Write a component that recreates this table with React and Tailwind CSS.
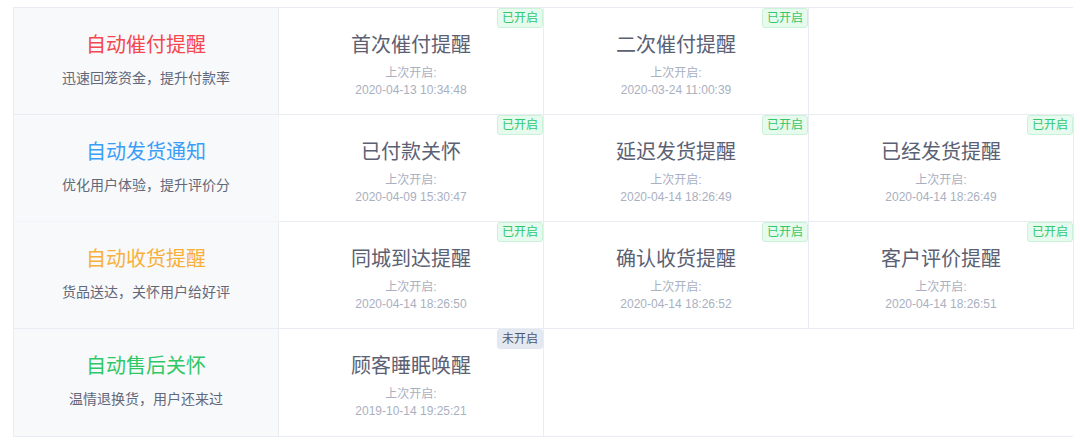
const groups = [
  {
    title: '自动催付提醒',
    desc: '迅速回笼资金，提升付款率',
    color: 'text-[#f5474f]',
    edge: 'border-b border-[#e9ecf2]',
    items: [
      { name: '首次催付提醒', time: '2020-04-13 10:34:48', on: true },
      { name: '二次催付提醒', time: '2020-03-24 11:00:39', on: true },
    ],
  },
  {
    title: '自动发货通知',
    desc: '优化用户体验，提升评价分',
    color: 'text-[#3a9ef8]',
    edge: 'border-b border-[#f2f4f8]',
    items: [
      { name: '已付款关怀', time: '2020-04-09 15:30:47', on: true },
      { name: '延迟发货提醒', time: '2020-04-14 18:26:49', on: true },
      { name: '已经发货提醒', time: '2020-04-14 18:26:49', on: true },
    ],
  },
  {
    title: '自动收货提醒',
    desc: '货品送达，关怀用户给好评',
    color: 'text-[#f9b03a]',
    edge: 'border-b border-[#e9ecf2]',
    items: [
      { name: '同城到达提醒', time: '2020-04-14 18:26:50', on: true },
      { name: '确认收货提醒', time: '2020-04-14 18:26:52', on: true },
      { name: '客户评价提醒', time: '2020-04-14 18:26:51', on: true },
    ],
  },
  {
    title: '自动售后关怀',
    desc: '温情退换货，用户还来过',
    color: 'text-[#2fc866]',
    edge: '',
    items: [{ name: '顾客睡眠唤醒', time: '2019-10-14 19:25:21', on: false }],
  },
];

function Badge({ on }) {
  return on ? (
    <span className="absolute top-0 right-0 h-[20px] px-[4px] leading-[18px] text-[12px] rounded-[3px] border border-[#c9f2d9] bg-[#e7faee] text-[#31c76b]">
      已开启
    </span>
  ) : (
    <span className="absolute top-0 right-0 h-[20px] px-[4px] leading-[18px] text-[12px] rounded-[3px] border border-[#e1e5ee] bg-[#e4e8f0] text-[#4f5668]">
      未开启
    </span>
  );
}

function Cell({ item, last }) {
  return (
    <div className={`relative h-[107px] flex flex-col items-center pt-[23px] border-r border-[#e9ecf2] ${last ? '' : 'border-b'}`}>
      <Badge on={item.on} />
      <div className="text-[20px] leading-[28px] text-[#5b6173]">{item.name}</div>
      <div className="mt-[6px] text-[12px] leading-[17px] text-[#a9b0bf]">上次开启:</div>
      <div className="text-[12px] leading-[17px] text-[#a9b0bf]">{item.time}</div>
    </div>
  );
}

export default function App() {
  return (
    <div className="w-[1080px] h-[440px] bg-white pt-[7px] pl-[13px]" style={{ fontFamily: '"Microsoft YaHei", "Liberation Sans", "Noto Sans CJK SC", sans-serif' }}>
      <div className="w-[1060px] grid grid-cols-[265px_265px_265px_265px] border-t border-b border-l border-[#e9ecf2]">
        {groups.map((g, gi) => {
          const last = gi === groups.length - 1;
          const cells = [];
          for (let i = 0; i < 3; i++) {
            const item = g.items[i];
            if (item) {
              cells.push(<Cell key={i} item={item} last={last} />);
            } else {
              cells.push(<div key={i} className={`h-[107px] ${last ? '' : 'border-b border-[#e9ecf2]'}`} />);
            }
          }
          return [
            <div key={'h' + gi} className={`h-[107px] bg-[#f8f9fb] flex flex-col items-center pt-[23px] border-r border-[#e9ecf2] ${g.edge}`}>
              <div className={`text-[20px] leading-[28px] ${g.color}`}>{g.title}</div>
              <div className="mt-[9px] text-[14px] leading-[20px] text-[#62687a]">{g.desc}</div>
            </div>,
            ...cells.map((c, i) => <div key={gi + '-' + i}>{c}</div>),
          ];
        })}
      </div>
    </div>
  );
}
